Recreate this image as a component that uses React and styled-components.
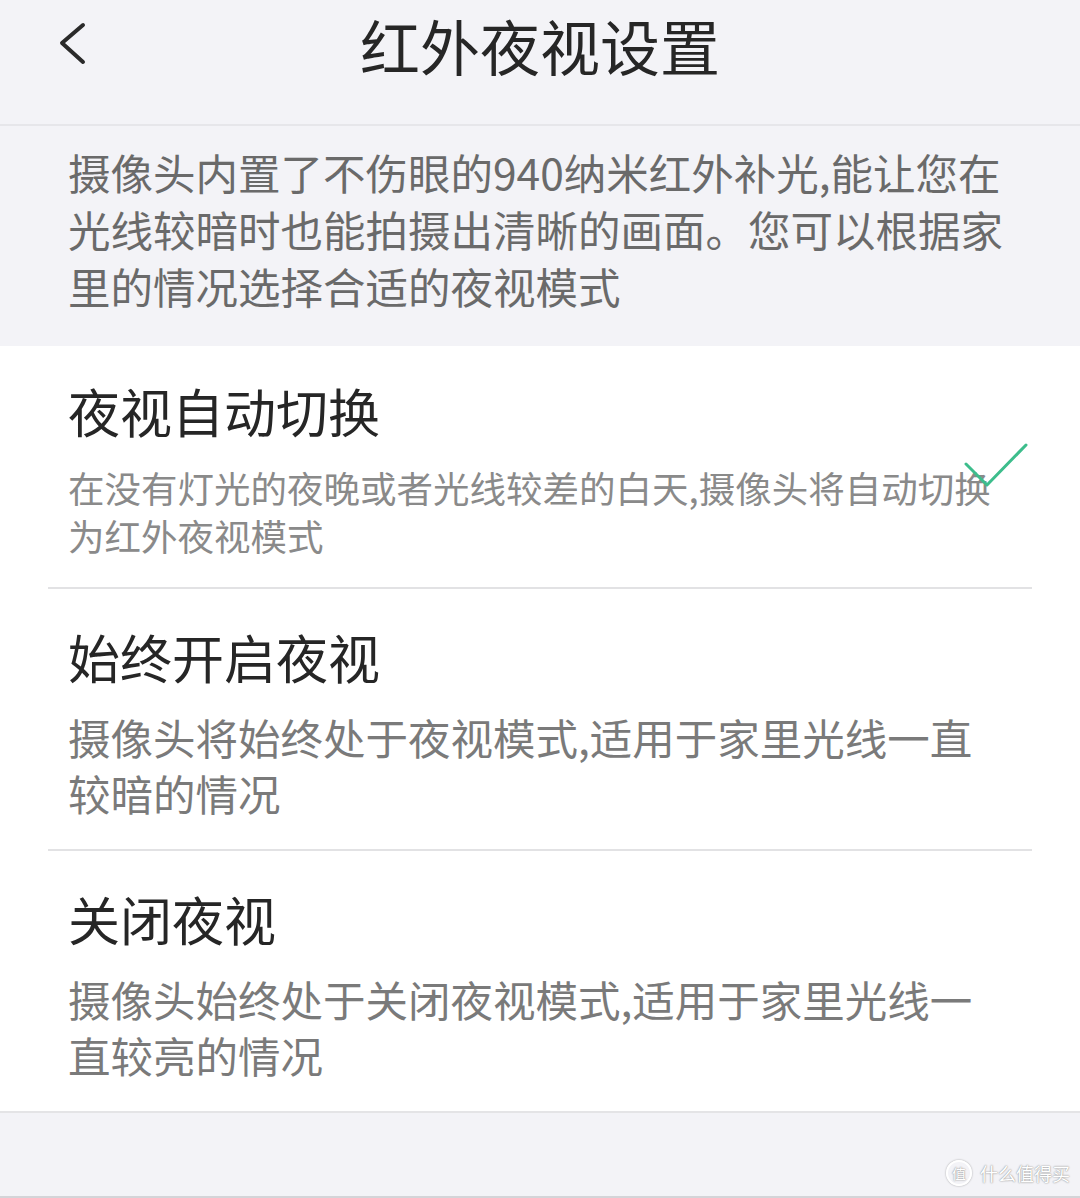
import styled, { createGlobalStyle } from "styled-components";

const GlobalStyle = createGlobalStyle`
  html, body {
    margin: 0;
    padding: 0;
    background: #f3f3f7;
  }
  body {
    font-family: "Noto Sans CJK SC", "Noto Sans", sans-serif;
  }
`;

const modes = [
  {
    title: "夜视自动切换",
    desc: "在没有灯光的夜晚或者光线较差的白天,摄像头将自动切换为红外夜视模式",
    small: true,
    checked: true,
  },
  {
    title: "始终开启夜视",
    desc: "摄像头将始终处于夜视模式,适用于家里光线一直较暗的情况",
  },
  {
    title: "关闭夜视",
    desc: "摄像头始终处于关闭夜视模式,适用于家里光线一直较亮的情况",
  },
];

const BackIcon = () => (
  <svg width="40" height="50" viewBox="0 0 40 50">
    <polyline
      points="26,6 5,24 26,43"
      fill="none"
      stroke="#2a2a2a"
      strokeWidth="4"
      strokeLinecap="round"
      strokeLinejoin="round"
    />
  </svg>
);

const CheckIcon = () => (
  <svg width="70" height="52" viewBox="0 0 70 52">
    <polyline
      points="4,22 25,43 64,3"
      fill="none"
      stroke="#3dbd8c"
      strokeWidth="3"
      strokeLinecap="round"
      strokeLinejoin="round"
    />
  </svg>
);

const App = () => {
  return (
    <Page>
      <GlobalStyle />
      <Header>
        <BackButton>
          <BackIcon />
        </BackButton>
        <Title>红外夜视设置</Title>
      </Header>
      <Intro>
        摄像头内置了不伤眼的940纳米红外补光,能让您在光线较暗时也能拍摄出清晰的画面。您可以根据家里的情况选择合适的夜视模式
      </Intro>
      <List>
        {modes.map((m, i) => (
          <Row key={m.title} $first={i === 0} $last={i === modes.length - 1}>
            <RowTitle>{m.title}</RowTitle>
            <RowDesc $small={m.small}>{m.desc}</RowDesc>
            {m.checked && (
              <Check>
                <CheckIcon />
              </Check>
            )}
          </Row>
        ))}
      </List>
      <Footer>
        <Watermark>
          <WatermarkBadge>值</WatermarkBadge>
          什么值得买
        </Watermark>
      </Footer>
    </Page>
  );
};

export default App;

const Page = styled.div`
  width: 1080px;
  min-height: 1198px;
  background: #f3f3f7;
  display: flex;
  flex-direction: column;
`;

const Header = styled.div`
  height: 124px;
  display: flex;
  justify-content: center;
  position: relative;
  border-bottom: 2px solid #e6e6ea;
`;

const BackButton = styled.div`
  position: absolute;
  left: 57px;
  top: 19px;
`;

const Title = styled.div`
  font-size: 60px;
  line-height: 90px;
  color: #262626;
`;

const Intro = styled.div`
  padding: 17px 62px 32px 68px;
  font-size: 42.5px;
  line-height: 57px;
  color: #6a6a6a;
`;

const List = styled.div`
  background: #ffffff;
  border-bottom: 2px solid #e4e4e6;
`;

const Row = styled.div`
  position: relative;
  margin: 0 48px;
  padding: ${(p) => (p.$first ? "33px" : "36px")} 34px
    ${(p) => (p.$first ? "27px" : "28px")} 20px;
  border-bottom: ${(p) => (p.$last ? "none" : "2px solid #e2e2e4")};
  display: flex;
  flex-direction: column;
  gap: ${(p) => (p.$first ? "21px" : "20px")};
`;

const RowTitle = styled.div`
  font-size: 52px;
  line-height: 64px;
  color: #262626;
`;

const RowDesc = styled.div`
  font-size: ${(p) => (p.$small ? "36.5px" : "42.5px")};
  line-height: ${(p) => (p.$small ? "48px" : "56px")};
  color: ${(p) => (p.$small ? "#8a8a8a" : "#7a7a7a")};
`;

const Check = styled.div`
  position: absolute;
  left: 914px;
  top: 96px;
`;

const Footer = styled.div`
  flex: 1;
  position: relative;
  border-bottom: 3px solid #d4d4d8;
  min-height: 83px;
`;

const Watermark = styled.div`
  position: absolute;
  right: 10px;
  bottom: 10px;
  display: flex;
  align-items: center;
  gap: 8px;
  font-size: 18px;
  color: #ffffff;
  text-shadow: 0 0 2px #9a9a9a, 0 0 1px #9a9a9a;
`;

const WatermarkBadge = styled.span`
  width: 22px;
  height: 22px;
  border-radius: 50%;
  border: 2px solid #ffffff;
  box-shadow: 0 0 2px #9a9a9a;
  display: flex;
  align-items: center;
  justify-content: center;
  font-size: 14px;
`;
